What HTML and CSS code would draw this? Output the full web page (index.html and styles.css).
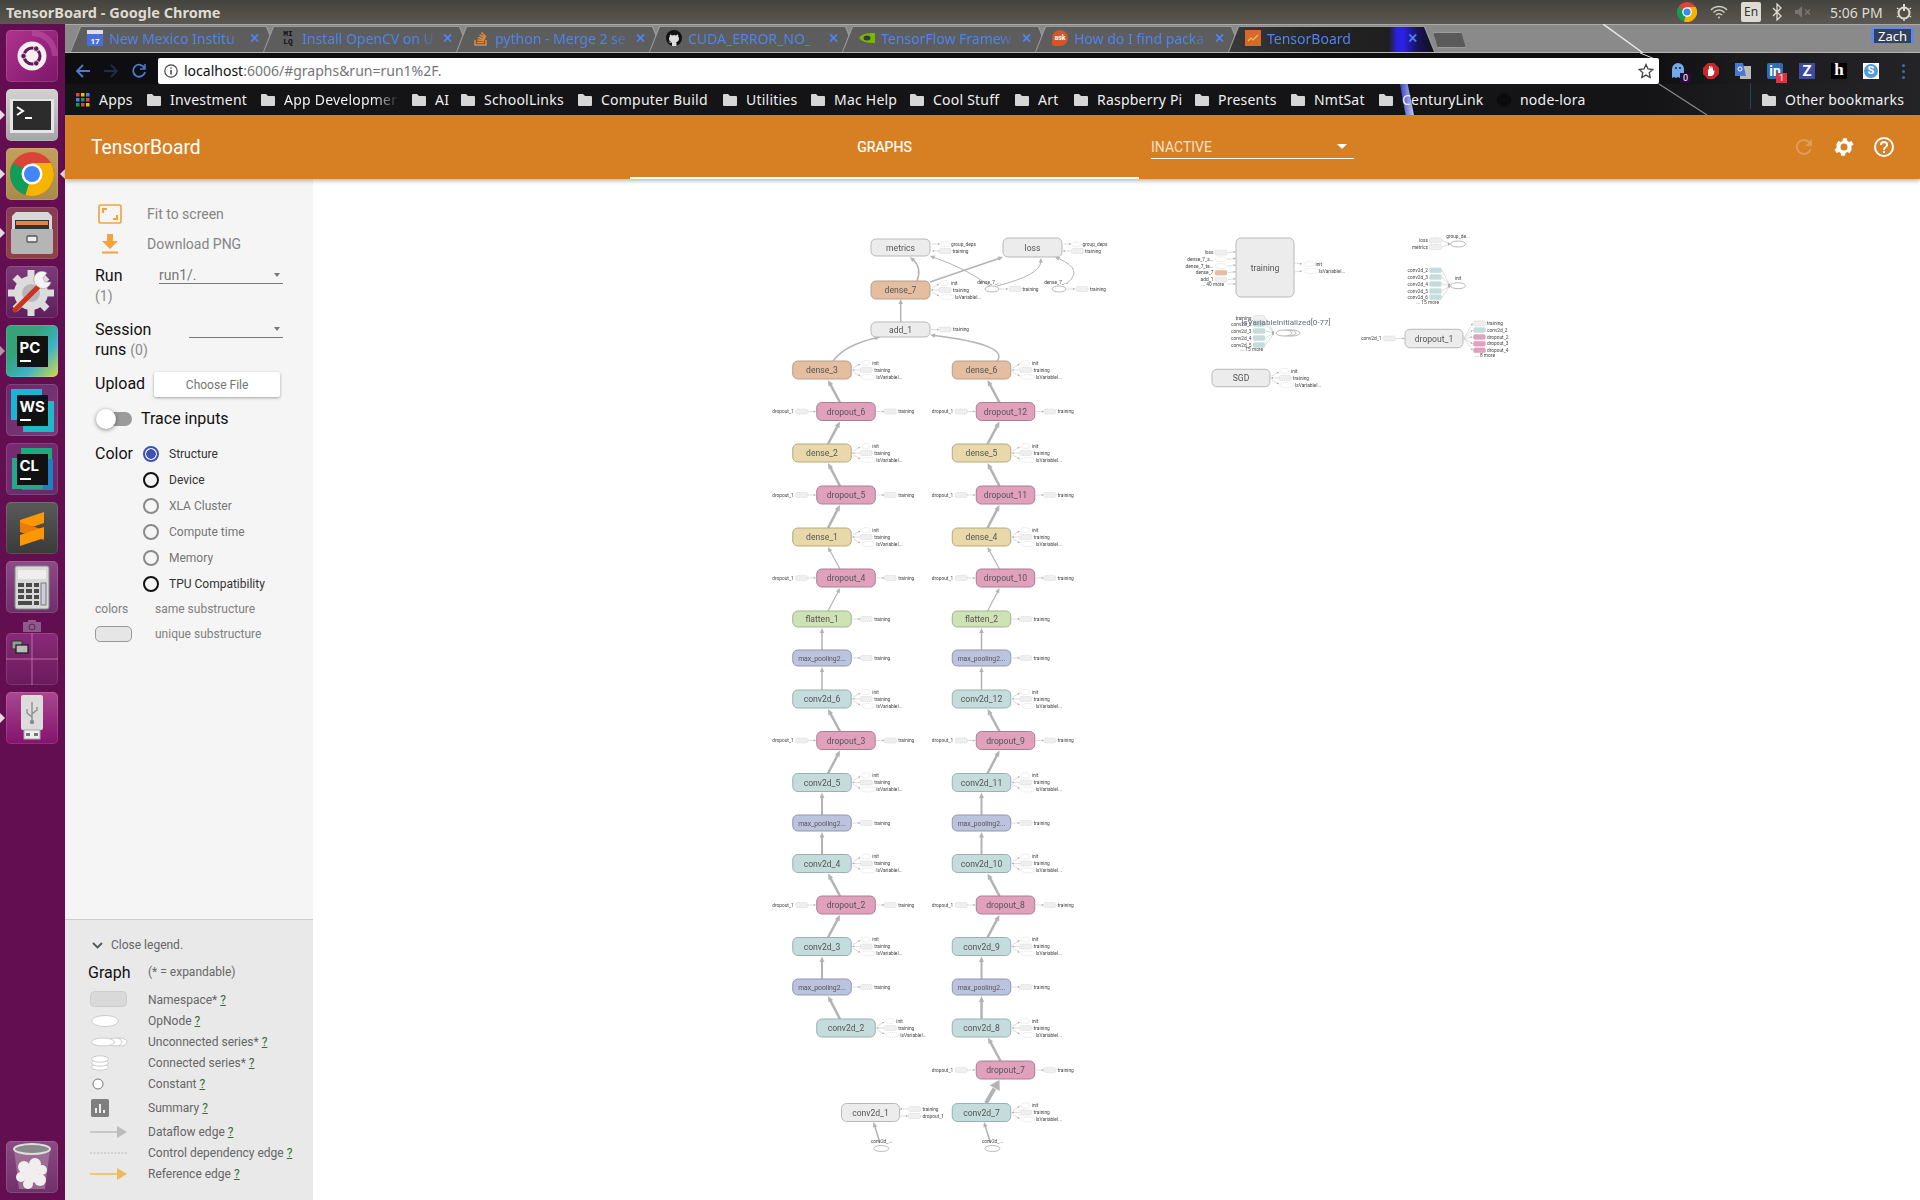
FILE: index.html
```html
<!DOCTYPE html>
<html lang="en">
<head>
    <meta charset="UTF-8">
    <title>TensorBoard - Google Chrome</title>
    <link rel="stylesheet" href="styles.css">
</head>
<body>
    <svg class="sprites" width="0" height="0">
        <symbol id="folder" viewBox="0 0 14 12"><path d="M1 0h4l2 2h6a1 1 0 0 1 1 1v8a1 1 0 0 1-1 1H1a1 1 0 0 1-1-1V1a1 1 0 0 1 1-1z"/></symbol>
    </svg>

    <div class="panel">
        <div class="panel-title">TensorBoard - Google Chrome</div>
        <div class="indicators">
            <svg class="ind-chrome" width="20" height="20" viewBox="0 0 20 20"><circle cx="10" cy="10" r="10" fill="#db4437"/><path d="M10 10L1.3 5A10 10 0 0 0 7 19.5z" fill="#0f9d58"/><path d="M10 10l-3 9.500A10 10 0 0 0 18.700 5H10z" fill="#f4b400"/><circle cx="10" cy="10" r="4.800" fill="#fff"/><circle cx="10" cy="10" r="3.600" fill="#4285f4"/></svg>
            <svg class="ind-wifi" width="18" height="14" viewBox="0 0 18 14" fill="none" stroke="#cfccc4" stroke-width="1.500"><path d="M1 5a11 11 0 0 1 16 0M3.500 7.500a7.500 7.500 0 0 1 11 0M6 10a4 4 0 0 1 6 0"/><circle cx="9" cy="12.500" r="1" fill="#cfccc4" stroke="none"/></svg>
            <div class="ind-lang">En</div>
            <svg class="ind-bt" width="10" height="18" viewBox="0 0 10 18" fill="none" stroke="#dfdbd2" stroke-width="1.300"><path d="M1 5l8 8-4 4V1l4 4-8 8"/></svg>
            <svg class="ind-vol" width="17" height="12" viewBox="0 0 17 12"><path d="M0 4h3l4-4v12L3 8H0z" fill="#77756e"/><path d="M10 3.500l5 5M15 3.500l-5 5" stroke="#77756e" stroke-width="1.500"/></svg>
            <div class="ind-time">5:06 PM</div>
            <svg class="ind-power" width="18" height="18" viewBox="0 0 18 18" fill="none" stroke="#dfdbd2" stroke-width="2"><circle cx="9" cy="10" r="5.500"/><path d="M9 1v7"/><path d="M9 1.500v1.500M2 5l1.500 1M16 5l-1.500 1M2 14l1.500-1M16 14l-1.500-1M9 16v2" stroke-width="1.500"/></svg>
        </div>
    </div>

    <div class="desk">
        <nav class="launcher">
            <div class="tile tile-ubuntu">
                <svg width="52" height="52" viewBox="0 0 52 52"><path d="M26 0a26 26 0 0 1 26 26h-6A20 20 0 0 0 26 6z" fill="#c45aa8" opacity=".5"/><circle cx="26" cy="26" r="14.500" fill="#f6eef3"/><circle cx="26" cy="26" r="8" fill="none" stroke="#5e1b55" stroke-width="3"/><circle cx="17.500" cy="26" r="2.700" fill="#5e1b55" stroke="#f6eef3" stroke-width=".8"/><circle cx="30.200" cy="18.700" r="2.700" fill="#5e1b55" stroke="#f6eef3" stroke-width=".8"/><circle cx="30.200" cy="33.300" r="2.700" fill="#5e1b55" stroke="#f6eef3" stroke-width=".8"/></svg>
            </div>
            <div class="tile tile-terminal">
                <svg width="52" height="52" viewBox="0 0 52 52"><rect x="4" y="10" width="44" height="34" fill="#e6e6e6"/><rect x="7" y="12" width="38" height="29" fill="#2c2c2c"/><path d="M11 18l6 4-6 4" fill="none" stroke="#fff" stroke-width="2"/><path d="M19 29h7" stroke="#fff" stroke-width="2"/></svg>
                <span class="pip"></span>
            </div>
            <div class="tile tile-chrome">
                <svg width="52" height="52" viewBox="0 0 52 52"><circle cx="26" cy="26" r="22" fill="#db4437"/><path d="M26 26L7 15a22 22 0 0 0 12.500 32z" fill="#0f9d58"/><path d="M26 26l-6.500 21A22 22 0 0 0 45 15H26z" fill="#f4b400"/><circle cx="26" cy="26" r="10.500" fill="#fff"/><circle cx="26" cy="26" r="8" fill="#4285f4"/></svg>
                <span class="pip"></span>
                <span class="pip pip-right"></span>
            </div>
            <div class="tile tile-files">
                <svg width="52" height="52" viewBox="0 0 52 52"><path d="M6 9l4-4h32l4 4v36H6z" fill="#d8d8d8"/><rect x="9" y="13" width="34" height="9" fill="#333"/><rect x="10" y="14" width="32" height="4" fill="#e8843c"/><path d="M5 22h42v23a2 2 0 0 1-2 2H7a2 2 0 0 1-2-2z" fill="#b5b5b5"/><rect x="21" y="29" width="10" height="6" rx="1" fill="#eee" stroke="#555" stroke-width="1.300"/></svg>
                <span class="pip"></span>
            </div>
            <div class="tile tile-settings">
                <svg width="52" height="52" viewBox="0 0 52 52"><circle cx="25" cy="27" r="17" fill="#dcdcdc"/><path d="M25 4v46M2 27h46M9 11l32 32M9 43l32-32" stroke="#dcdcdc" stroke-width="7"/><circle cx="25" cy="27" r="9" fill="#b9b3ba"/><path d="M9 44l25-25" stroke="#c8341f" stroke-width="5" stroke-linecap="round"/><path d="M31 20a8 8 0 0 1 10-13l-4 5 2 4 6 0a8 8 0 0 1-11 6z" fill="#f4f4f4" stroke="#999" stroke-width=".6"/></svg>
            </div>
            <div class="tile tile-pc">
                <div class="jb-square"><span>PC</span><i></i></div>
                <span class="pip pip-hollow"></span>
            </div>
            <div class="tile tile-ws">
                <div class="jb-square"><span>WS</span><i></i></div>
            </div>
            <div class="tile tile-cl">
                <div class="jb-square"><span>CL</span><i></i></div>
            </div>
            <div class="tile tile-sublime">
                <svg width="52" height="52" viewBox="0 0 52 52"><path d="M38 10v11L14 29V18z" fill="#ff9800"/><path d="M14 30l24 8v-10l-24-8z" fill="#e87e04"/><path d="M38 31v11l-24 8V39z" fill="#ff9800" transform="translate(0 -6)"/></svg>
            </div>
            <div class="tile tile-calc">
                <svg width="52" height="52" viewBox="0 0 52 52"><rect x="9" y="5" width="34" height="43" rx="2" fill="#d8d8d8" stroke="#888"/><rect x="12" y="9" width="28" height="9" fill="#eee"/><g fill="#4a4a4a"><rect x="12" y="22" width="6" height="4"/><rect x="20" y="22" width="6" height="4"/><rect x="28" y="22" width="5" height="4"/><rect x="12" y="28" width="6" height="4"/><rect x="20" y="28" width="6" height="4"/><rect x="28" y="28" width="5" height="4"/><rect x="12" y="34" width="6" height="4"/><rect x="20" y="34" width="6" height="4"/><rect x="28" y="34" width="5" height="4"/><rect x="12" y="40" width="14" height="4"/><rect x="28" y="40" width="5" height="4"/></g><rect x="35" y="22" width="5" height="22" fill="#ccd" stroke="#555" stroke-width=".7"/></svg>
            </div>
            <div class="shot-ghost">
                <svg width="20" height="14" viewBox="0 0 20 14"><rect x="1" y="3" width="18" height="10" fill="#8e5a8c"/><rect x="6" y="1" width="8" height="3" fill="#8e5a8c"/><circle cx="10" cy="8" r="3" fill="none" stroke="#5a2a58"/></svg>
            </div>
            <div class="tile tile-workspace">
                <svg width="52" height="52" viewBox="0 0 52 52"><path d="M26 0v52M0 26h52" stroke="#c796bd" stroke-width=".7"/><rect x="6" y="8" width="10" height="8" fill="#999" stroke="#333"/><rect x="10" y="12" width="12" height="8" fill="#bbb" stroke="#222" stroke-width="1.300"/></svg>
            </div>
            <div class="tile tile-usb">
                <svg width="52" height="52" viewBox="0 0 52 52"><rect x="15" y="3" width="22" height="35" rx="2" fill="#dcdcdc"/><rect x="18" y="38" width="16" height="9" fill="#eee" stroke="#aaa"/><rect x="20" y="41" width="4" height="3" fill="#777"/><rect x="28" y="41" width="4" height="3" fill="#777"/><path d="M26 10v20M26 25l-5-4v-4M26 22l5-4v-3" fill="none" stroke="#8a8a8a" stroke-width="1.300"/><circle cx="26" cy="30" r="2.200" fill="#8a8a8a"/></svg>
                <span class="pip"></span>
            </div>
            <div class="tile tile-trash">
                <svg width="52" height="52" viewBox="0 0 52 52"><path d="M8 8l5 40h26l5-40z" fill="#a882a0" opacity=".7"/><ellipse cx="26" cy="8" rx="18" ry="5" fill="#8a8a8a" stroke="#ddd" stroke-width="2"/><g fill="#f0eeee"><circle cx="18" cy="26" r="6"/><circle cx="29" cy="23" r="6"/><circle cx="36" cy="29" r="5"/><circle cx="15" cy="36" r="5"/><circle cx="25" cy="34" r="8"/><circle cx="34" cy="39" r="6"/><circle cx="22" cy="43" r="5"/></g></svg>
            </div>
        </nav>

        <div class="window">
            <div class="tabstrip">
                <div class="tab">
                    <svg class="favicon" width="16" height="16" viewBox="0 0 16 16"><rect width="16" height="16" rx="1" fill="#4a6fd8"/><rect width="16" height="4" fill="#dde"/><text x="8" y="14" text-anchor="middle" class="fav-text">17</text></svg>
                    <span class="tab-title">New Mexico Institu</span><span class="tab-x">×</span>
                </div>
                <div class="tab">
                    <div class="favicon fav-mlq">MI<br>LQ</div>
                    <span class="tab-title">Install OpenCV on U</span><span class="tab-x">×</span>
                </div>
                <div class="tab">
                    <svg class="favicon" width="16" height="16" viewBox="0 0 16 16" fill="none" stroke="#e08a3a" stroke-width="1.500"><path d="M2 10v5h11v-5"/><path d="M4 12.500h7M4.300 10l7 .6M5 7.500l6.800 1.800M6.500 4.800l6 3.200M8.500 2.500l4.500 4.500"/></svg>
                    <span class="tab-title">python - Merge 2 se</span><span class="tab-x">×</span>
                </div>
                <div class="tab">
                    <svg class="favicon" width="16" height="16" viewBox="0 0 16 16"><circle cx="8" cy="8" r="8" fill="#111"/><path d="M6 16v-3c-2 .4-3-.6-3.400-1.800 1 .3 1.400 1 2 1.300.5.200 1 .1 1.400-.2-1.800-.4-3-1.500-3-3.500 0-1 .3-1.600.8-2.200-.1-.6-.1-1.300.2-2 .8 0 1.500.4 2 .8a6 6 0 0 1 4 0c.5-.4 1.200-.8 2-.8.300.7.300 1.400.2 2 .5.600.8 1.200.8 2.200 0 2-1.200 3.100-3 3.500.3.300.5.800.5 1.400V16z" fill="#ddd"/></svg>
                    <span class="tab-title">CUDA_ERROR_NO_</span><span class="tab-x">×</span>
                </div>
                <div class="tab">
                    <svg class="favicon" width="16" height="16" viewBox="0 0 16 16"><path d="M0 8c3-4 7-5 16-5v10C8 13 3 12 0 8z" fill="#76b900"/><ellipse cx="8" cy="8" rx="3.500" ry="2.500" fill="#3a3a3a"/></svg>
                    <span class="tab-title">TensorFlow Framew</span><span class="tab-x">×</span>
                </div>
                <div class="tab">
                    <div class="favicon fav-ask">ask</div>
                    <span class="tab-title">How do I find packa</span><span class="tab-x">×</span>
                </div>
                <div class="tab tab-active">
                    <svg class="favicon" width="16" height="16" viewBox="0 0 16 16"><rect width="16" height="16" fill="#d8682f"/><path d="M3 11l3-3 2 2 5-5" fill="none" stroke="#f0c040" stroke-width="1.200"/></svg>
                    <span class="tab-title">TensorBoard</span><span class="tab-x">×</span>
                </div>
                <div class="new-tab"></div>
            </div>

            <div class="toolbar">
                <svg class="nav-icon" width="16" height="16" viewBox="0 0 16 16" fill="none" stroke="#4a7cd0" stroke-width="1.800"><path d="M15 8H2M8 2L2 8l6 6"/></svg>
                <svg class="nav-icon" width="16" height="16" viewBox="0 0 16 16" fill="none" stroke="#1d2c50" stroke-width="1.800"><path d="M1 8h13M8 2l6 6-6 6"/></svg>
                <svg class="nav-icon" width="16" height="16" viewBox="0 0 16 16" fill="none" stroke="#4a7cd0" stroke-width="1.800"><path d="M13.500 5A6 6 0 1 0 14 9"/><path d="M14 1v5H9" stroke-width="1.500"/></svg>
                <div class="urlbar">
                    <svg width="14" height="14" viewBox="0 0 14 14" fill="none" stroke="#444" stroke-width="1.200"><circle cx="7" cy="7" r="6.200"/><path d="M7 6v4.500M7 3.500v1.300" stroke-width="1.500"/></svg>
                    <div class="url"><span class="url-host">localhost</span>:6006/#graphs&amp;run=run1%2F.</div>
                    <svg class="url-star" width="16" height="16" viewBox="0 0 16 16" fill="none" stroke="#444" stroke-width="1.300"><path d="M8 1.500l2 4.500 4.800.5-3.600 3.200 1 4.800L8 12.100l-4.200 2.400 1-4.800L1.200 6.500 6 6z"/></svg>
                </div>
                <div class="exts">
                    <div class="ext"><svg width="16" height="20" viewBox="0 0 16 20"><path d="M1 8a6 6 0 0 1 12 0v9l-2-1-2 1-2-1-2 1-2-1-2 1z" fill="#74a9e8"/><circle cx="5" cy="7" r="1" fill="#123"/><circle cx="9" cy="7" r="1" fill="#123"/></svg><span class="ext-badge ext-badge-dark">0</span></div>
                    <div class="ext"><svg width="16" height="16" viewBox="0 0 16 16"><path d="M5 0h6l5 5v6l-5 5H5l-5-5V5z" fill="#c62828"/><path d="M5 13V6l1 1V3h1v3l1-4 1 4 1-3v5l1.500-1-.5 4-2 2z" fill="#fff"/></svg></div>
                    <div class="ext"><svg width="16" height="16" viewBox="0 0 16 16"><rect x="5" y="3" width="11" height="13" fill="#bbb"/><path d="M0 0h8l3 13H0z" fill="#4a78d8"/><circle cx="5" cy="6" r="2" fill="none" stroke="#fff"/></svg></div>
                    <div class="ext"><div class="ext-in">in</div><span class="ext-badge ext-badge-red">1</span></div>
                    <div class="ext"><div class="ext-z">Z</div></div>
                    <div class="ext"><div class="ext-h">h</div></div>
                    <div class="ext"><div class="ext-s"><span>S</span></div></div>
                    <div class="ext"><div class="ext-dots"><i></i><i></i><i></i></div></div>
                </div>
            </div>

            <div class="bookmarks">
                <div class="bm">
                    <svg class="bm-icon" width="14" height="14" viewBox="0 0 14 14"><rect width="3.500" height="3.500" fill="#d9483b"/><rect x="5" width="3.500" height="3.500" fill="#f4b400"/><rect x="10" width="3.500" height="3.500" fill="#4285f4"/><rect y="5" width="3.500" height="3.500" fill="#4285f4"/><rect x="5" y="5" width="3.500" height="3.500" fill="#0f9d58"/><rect x="10" y="5" width="3.500" height="3.500" fill="#d9483b"/><rect y="10" width="3.500" height="3.500" fill="#0f9d58"/><rect x="5" y="10" width="3.500" height="3.500" fill="#d9483b"/><rect x="10" y="10" width="3.500" height="3.500" fill="#f4b400"/></svg>
                    <span>Apps</span>
                </div>
                <div class="bm"><svg class="bm-folder"><use href="#folder"/></svg><span>Investment</span></div>
                <div class="bm bm-fade"><svg class="bm-folder"><use href="#folder"/></svg><span>App Developmer</span></div>
                <div class="bm"><svg class="bm-folder"><use href="#folder"/></svg><span>AI</span></div>
                <div class="bm"><svg class="bm-folder"><use href="#folder"/></svg><span>SchoolLinks</span></div>
                <div class="bm"><svg class="bm-folder"><use href="#folder"/></svg><span>Computer Build</span></div>
                <div class="bm"><svg class="bm-folder"><use href="#folder"/></svg><span>Utilities</span></div>
                <div class="bm"><svg class="bm-folder"><use href="#folder"/></svg><span>Mac Help</span></div>
                <div class="bm"><svg class="bm-folder"><use href="#folder"/></svg><span>Cool Stuff</span></div>
                <div class="bm"><svg class="bm-folder"><use href="#folder"/></svg><span>Art</span></div>
                <div class="bm"><svg class="bm-folder"><use href="#folder"/></svg><span>Raspberry Pi</span></div>
                <div class="bm"><svg class="bm-folder"><use href="#folder"/></svg><span>Presents</span></div>
                <div class="bm"><svg class="bm-folder"><use href="#folder"/></svg><span>NmtSat</span></div>
                <div class="bm"><svg class="bm-folder"><use href="#folder"/></svg><span>CenturyLink</span></div>
                <div class="bm">
                    <svg class="bm-icon" width="14" height="14" viewBox="0 0 14 14"><circle cx="7" cy="7" r="7" fill="#0b0b0b"/></svg>
                    <span>node-lora</span>
                </div>
                <div class="bm bm-other"><svg class="bm-folder"><use href="#folder"/></svg><span>Other bookmarks</span></div>
            </div>

            <!-- wallpaper showing through the translucent chrome theme -->
            <svg class="wallpaper" width="110" height="92" viewBox="0 0 110 92">
                <path d="M0 0L40 29" stroke="#e8e8e8" stroke-width="1.500"/>
                <path d="M37 29l15 6" stroke="#ddd"/>
                <path d="M56 60L104 91" stroke="#8a8a8a" stroke-width="1.200"/>
            </svg>
            <div class="stripe"></div>
            <div class="avatar"><span>Zach</span></div>

            <header class="tb-header">
                <div class="tb-title">TensorBoard</div>
                <div class="tb-tab">GRAPHS</div>
                <div class="tb-select"><span>INACTIVE</span><i class="tb-caret"></i></div>
                <div class="tb-icons">
                    <svg width="24" height="24" viewBox="0 0 24 24" fill="#e49a55"><path d="M17.650 6.350A8 8 0 1 0 19.700 14h-2.100a6 6 0 1 1-1.400-6.200L13 11h7V4z"/></svg>
                    <svg width="24" height="24" viewBox="0 0 24 24" fill="#fff"><path d="M19.400 13a7.500 7.500 0 0 0 0-2l2.100-1.600-2-3.500-2.500 1a7.500 7.500 0 0 0-1.700-1l-.4-2.600h-4l-.4 2.600a7.500 7.500 0 0 0-1.700 1l-2.500-1-2 3.500L4.600 11a7.500 7.500 0 0 0 0 2l-2.100 1.600 2 3.500 2.500-1c.5.400 1.100.7 1.700 1l.4 2.600h4l.4-2.600c.6-.3 1.200-.6 1.700-1l2.500 1 2-3.500zM12 15.500a3.500 3.500 0 1 1 0-7 3.500 3.500 0 0 1 0 7z"/></svg>
                    <svg width="24" height="24" viewBox="0 0 24 24" fill="#fff"><path d="M12 2a10 10 0 1 0 0 20 10 10 0 0 0 0-20zm0 18a8 8 0 1 1 0-16 8 8 0 0 1 0 16zM11 16h2v2h-2zm1-10a4 4 0 0 0-4 4h2a2 2 0 1 1 4 0c0 2-3 1.750-3 5h2c0-2.250 3-2.500 3-5a4 4 0 0 0-4-4z"/></svg>
                </div>
            </header>

            <div class="tb-body">
                <aside class="sidebar">
                    <div class="controls">
                        <div class="action-row">
                            <svg class="icon-fit" width="24" height="20" viewBox="0 0 24 20" fill="none" stroke="#f2a43c" stroke-width="1.700"><rect x="1" y="1" width="22" height="18" rx="1.500"/><path d="M5 9V5h4M19 11v4h-4" stroke-width="2"/></svg>
                            <span>Fit to screen</span>
                        </div>
                        <div class="action-row">
                            <svg class="icon-download" width="16" height="20" viewBox="0 0 16 20" fill="#f2a43c"><path d="M5 0h6v7h5l-8 8-8-8h5z"/><rect y="17.500" width="16" height="2"/></svg>
                            <span>Download PNG</span>
                        </div>
                        <div class="run-row">
                            <div class="field-label run-label">Run</div>
                            <div class="select select-run"><span>run1/.</span><i class="caret"></i></div>
                        </div>
                        <div class="count">(1)</div>
                        <div class="session-row">
                            <div class="field-label">Session<br>runs <span class="count">(0)</span></div>
                            <div class="select select-session"><i class="caret"></i></div>
                        </div>
                        <div class="upload-row">
                            <div class="field-label">Upload</div>
                            <div class="file-button">Choose File</div>
                        </div>
                        <div class="toggle-row">
                            <div class="toggle"><i></i></div>
                            <span class="field-label">Trace inputs</span>
                        </div>
                        <div class="color-block">
                            <div class="field-label color-label">Color</div>
                            <div class="radios">
                                <div class="radio radio-on"><i></i><span>Structure</span></div>
                                <div class="radio radio-dark"><i></i><span>Device</span></div>
                                <div class="radio"><i></i><span>XLA Cluster</span></div>
                                <div class="radio"><i></i><span>Compute time</span></div>
                                <div class="radio"><i></i><span>Memory</span></div>
                                <div class="radio radio-dark"><i></i><span>TPU Compatibility</span></div>
                            </div>
                        </div>
                        <div class="colors-row"><span>colors</span><span>same substructure</span></div>
                        <div class="colors-row colors-row-tall"><div class="substructure"></div><span>unique substructure</span></div>
                    </div>

                    <div class="legend">
                        <div class="legend-close">
                            <svg width="11" height="7" viewBox="0 0 11 7" fill="none" stroke="#555" stroke-width="1.800"><path d="M1 1l4.500 4.500L10 1"/></svg>
                            <span>Close legend.</span>
                        </div>
                        <div class="legend-head"><span class="legend-graph">Graph</span><span>(* = expandable)</span></div>
                        <div class="legend-row">
                            <svg width="38" height="17" viewBox="0 0 38 17"><rect x=".5" y=".5" width="36" height="15" rx="4" fill="#d9d9d9" stroke="#ccc"/></svg>
                            <span>Namespace* <u>?</u></span>
                        </div>
                        <div class="legend-row">
                            <svg width="38" height="14" viewBox="0 0 38 14"><ellipse cx="15" cy="7" rx="13.500" ry="5.500" fill="#fff" stroke="#ccc"/></svg>
                            <span>OpNode <u>?</u></span>
                        </div>
                        <div class="legend-row">
                            <svg width="38" height="12" viewBox="0 0 38 12" fill="#fff" stroke="#ccc"><ellipse cx="30" cy="6" rx="7" ry="4"/><ellipse cx="25" cy="6" rx="7" ry="4"/><ellipse cx="13" cy="6" rx="11.500" ry="4"/></svg>
                            <span>Unconnected series* <u>?</u></span>
                        </div>
                        <div class="legend-row">
                            <svg width="38" height="16" viewBox="0 0 38 16" fill="#fff" stroke="#ccc"><ellipse cx="10" cy="12" rx="8.500" ry="3.200"/><ellipse cx="10" cy="8" rx="8.500" ry="3.200"/><ellipse cx="10" cy="4" rx="8.500" ry="3.200"/></svg>
                            <span>Connected series* <u>?</u></span>
                        </div>
                        <div class="legend-row">
                            <svg width="38" height="12" viewBox="0 0 38 12"><circle cx="8" cy="6" r="5" fill="#fff" stroke="#777"/></svg>
                            <span>Constant <u>?</u></span>
                        </div>
                        <div class="legend-row legend-row-tall">
                            <svg width="38" height="18" viewBox="0 0 38 18"><rect x="1" width="18" height="18" rx="1.500" fill="#7f7f7f"/><path d="M5 9h2v5H5zM9 5h2v9H9zM13 11h2v3h-2z" fill="#eee"/></svg>
                            <span>Summary <u>?</u></span>
                        </div>
                        <div class="legend-row">
                            <svg width="38" height="12" viewBox="0 0 38 12"><path d="M0 6h28" stroke="#bbb" stroke-width="1.500"/><path d="M27 0l10 6-10 6z" fill="#bbb"/></svg>
                            <span>Dataflow edge <u>?</u></span>
                        </div>
                        <div class="legend-row">
                            <svg width="38" height="6" viewBox="0 0 38 6"><path d="M0 3h37" stroke="#bbb" stroke-dasharray="2 1.500"/></svg>
                            <span>Control dependency edge <u>?</u></span>
                        </div>
                        <div class="legend-row">
                            <svg width="38" height="12" viewBox="0 0 38 12"><path d="M0 6h28" stroke="#f0b95a" stroke-width="1.500"/><path d="M27 0l10 6-10 6z" fill="#f0b95a"/></svg>
                            <span>Reference edge <u>?</u></span>
                        </div>
                    </div>
                </aside>

                <main class="graph">
                    <svg id="graph" class="graph-svg" width="1607" height="1021" viewBox="313 179 1607 1021"></svg>
                </main>
            </div>
        </div>
    </div>

    <script src="graph.js"></script>
</body>
</html>
```
FILE: styles.css
```css
* {
    box-sizing: border-box;
}
html, body {
    margin: 0;
    height: 1200px;
    overflow: hidden;
}
body {
    font-family: Roboto, Arial, sans-serif;
    background: #fff;
}
.sprites {
    position: absolute;
}

/* desktop top panel */
.panel {
    height: 24px;
    display: flex;
    align-items: center;
    background: linear-gradient(#44433d, #5a5850);
    color: #dfdbd2;
}
.panel-title {
    padding-left: 6px;
    font: bold 14.500px "Noto Sans", sans-serif;
}
.indicators {
    margin-left: auto;
    display: flex;
    align-items: center;
    padding-right: 7px;
}
.ind-wifi, .ind-lang, .ind-vol, .ind-power {
    margin-left: 13px;
}
.ind-bt {
    margin-left: 11px;
}
.ind-time {
    margin-left: 18px;
    font: 14px "Noto Sans", sans-serif;
    width: 52px;
    white-space: nowrap;
}
.ind-lang {
    width: 20px;
    height: 20px;
    background: #dfdbd2;
    color: #333;
    border-radius: 2px;
    font: 12px/20px "Noto Sans", sans-serif;
    text-align: center;
}

.desk {
    display: flex;
    height: 1176px;
}

/* unity launcher */
.launcher {
    width: 65px;
    flex: none;
    display: flex;
    flex-direction: column;
    align-items: flex-start;
    gap: 7px;
    padding: 6px 0 7px 6px;
    background: #620e50;
}
.tile {
    position: relative;
    width: 52px;
    height: 52px;
    flex: none;
    border-radius: 5px;
    display: flex;
    align-items: center;
    justify-content: center;
    box-shadow: inset 0 0 0 1px rgba(255, 255, 255, .12);
}
.tile-ubuntu { background: linear-gradient(135deg, #b0348f, #7d1768); }
.tile-terminal { background: linear-gradient(#d2d2d2, #a5a5a5); }
.tile-chrome { background: linear-gradient(#c2a15a, #a88a4a); }
.tile-files { background: linear-gradient(#8b3a55, #8f4046); }
.tile-settings { background: linear-gradient(#7c3a78, #5f1e5c); }
.tile-pc { background: linear-gradient(135deg, #35a27a 35%, #3bb3c6 65%, #d9d83f); }
.tile-ws { background: linear-gradient(135deg, #6a2a6a, #7a3a7a); }
.tile-cl { background: linear-gradient(135deg, #7a2a72, #6a2a68); }
.tile-sublime { background: linear-gradient(#5a5a5a, #3a3a3a); }
.tile-calc { background: linear-gradient(#8c4a86, #6e2f6a); }
.tile-workspace { background: linear-gradient(#8a2a78, #6a1a5c); }
.tile-usb { background: linear-gradient(#a8488f, #85126e); }
.tile-trash {
    margin-top: auto;
    background: linear-gradient(#8a4a82, #70306a);
}
.tile-workspace {
    margin-top: -7px;
}
.shot-ghost {
    height: 15px;
    width: 52px;
    margin-top: -2px;
    text-align: center;
}
.pip {
    position: absolute;
    left: -6px;
    top: 21px;
    border-left: 5px solid #e6dbe4;
    border-top: 5px solid transparent;
    border-bottom: 5px solid transparent;
}
.pip-hollow {
    opacity: .65;
}
.pip-right {
    left: auto;
    right: -7px;
    border-left: 0;
    border-right: 5px solid #e6dbe4;
}
.jb-square {
    width: 31px;
    height: 31px;
    background: #111;
    color: #fff;
    font: bold 15px/19px Inter, sans-serif;
    padding: 2px 0 0 3px;
    position: relative;
}
.jb-square span {
    display: block;
}
.jb-square i {
    display: block;
    width: 11px;
    height: 2px;
    margin-top: 3px;
    background: #fff;
}
.tile-ws .jb-square { box-shadow: -6px -6px 0 #19b5d5, 6px 6px 0 #1fb7c9; }
.tile-cl .jb-square { box-shadow: -5px 4px 0 #1fa88a, 5px 5px 0 #1f7fc5, 4px -6px 0 #21a97e; }

/* chrome window */
.window {
    flex: 1;
    min-width: 0;
    position: relative;
    display: flex;
    flex-direction: column;
}
.tabstrip {
    height: 29px;
    flex: none;
    display: flex;
    padding: 1px 0 0 5px;
    background: #8a8a8a;
    border-top: 1px solid #aaa;
    border-bottom: 1px solid #b5b5b5;
}
.tab {
    width: 207px;
    margin-right: -14px;
    position: relative;
    display: flex;
    align-items: center;
    padding: 0 7px 2px 17px;
    clip-path: polygon(10px 0, 197px 0, 207px 100%, 0 100%);
    background: #9a9a9a;
}
.tab::before {
    content: "";
    position: absolute;
    inset: 1px 1px 0;
    background: #5d5d5d;
    clip-path: polygon(10px 0, 195px 0, 205px 100%, 0 100%);
}
.tab > * {
    position: relative;
}
.tab-active::before {
    background: linear-gradient(90deg, #3a3a3a, #232323 45%, #1f1f1f 78%, #2a20e0 82%, #2a20e0 85%, #18125f 92%, #111);
}
.favicon {
    flex: none;
}
.fav-text {
    font: bold 8px Roboto, sans-serif;
    fill: #fff;
}
.fav-mlq {
    width: 16px;
    font: bold 8px/8px "Liberation Mono", monospace;
    color: #111;
    text-align: center;
}
.fav-ask {
    width: 16px;
    height: 16px;
    border-radius: 8px 8px 8px 2px;
    background: #d2562a;
    color: #fff;
    font: bold 7px/16px Roboto, sans-serif;
    text-align: center;
}
.tab-title {
    width: 136px;
    margin-left: 6px;
    white-space: nowrap;
    font: 14px "Noto Sans", sans-serif;
    color: #4f84ee;
    mask-image: linear-gradient(90deg, #000 118px, transparent 136px);
}
.tab-x {
    margin-left: 5px;
    color: #4f84ee;
    font: 18px/18px Roboto, sans-serif;
}
.new-tab {
    width: 33px;
    height: 16px;
    margin: 6px 0 0 12px;
    background: #5a5a5a;
    border: 1px solid #9a9a9a;
    clip-path: polygon(0 0, 85% 0, 100% 100%, 15% 100%);
}
.toolbar {
    height: 31px;
    flex: none;
    display: flex;
    align-items: flex-end;
    padding-left: 10px;
    background: linear-gradient(90deg, #0e0e10 85%, #1a1a1c 90%, #242426);
}
.nav-icon {
    margin: 0 12px 5px 0;
    flex: none;
}
.urlbar {
    width: 1501px;
    height: 26px;
    margin-left: -1px;
    flex: none;
    display: flex;
    align-items: center;
    padding: 0 5px 1px 6px;
    background: #fff;
    border-radius: 2px;
    z-index: 1;
}
.url {
    margin-left: 6px;
    color: #757575;
    font: 14px "Noto Sans", sans-serif;
}
.url-host {
    color: #111;
}
.url-star {
    margin-left: auto;
}
.exts {
    display: flex;
    margin-left: 4px;
    height: 31px;
    z-index: 1;
}
.ext {
    position: relative;
    width: 32px;
    display: flex;
    align-items: center;
    justify-content: center;
    padding-top: 5px;
}
.ext-badge {
    position: absolute;
    left: 17px;
    top: 20px;
    width: 11px;
    height: 10px;
    color: #fff;
    font: 9px/10px Roboto, sans-serif;
    text-align: center;
}
.ext-badge-dark { background: #2a0d3c; }
.ext-badge-red { background: #d9343f; }
.ext-in {
    width: 16px;
    height: 16px;
    background: #2f6db5;
    color: #fff;
    border-radius: 2px;
    font: bold 14px/16px Roboto, sans-serif;
    text-align: center;
}
.ext-z {
    width: 16px;
    height: 16px;
    background: #3f4aa0;
    color: #fff;
    font: bold 15px/16px Roboto, sans-serif;
    text-align: center;
}
.ext-h {
    width: 16px;
    height: 16px;
    background: #000;
    color: #fff;
    font: bold 17px/14px "Liberation Serif", serif;
    text-align: center;
}
.ext-s {
    width: 16px;
    height: 16px;
    padding: 1px;
    background: #fff;
    text-align: center;
}
.ext-s span {
    display: block;
    height: 14px;
    border-radius: 50%;
    background: #4f9ae0;
    color: #fff;
    font: bold 11px/14px Roboto, sans-serif;
}
.ext-dots {
    display: flex;
    flex-direction: column;
    gap: 3px;
}
.ext-dots i {
    width: 3px;
    height: 3px;
    border-radius: 50%;
    background: #3d6db5;
}
.bookmarks {
    height: 31px;
    flex: none;
    display: grid;
    grid-template-columns: 71px 114px 151px 49px 117px 145px 88px 99px 105px 59px 121px 96px 88px 118px 265px 150px;
    align-items: center;
    padding-left: 11px;
    background: linear-gradient(90deg, #141416 85%, #1c1c1e 90%, #242426);
    color: #f0f0f0;
    font: 14px "Noto Sans", sans-serif;
    letter-spacing: .22px;
}
.bm {
    display: flex;
    align-items: center;
    white-space: nowrap;
    position: relative;
    z-index: 1;
}
.bm-icon {
    flex: none;
    margin-right: 9px;
}
.bm-folder {
    width: 14px;
    height: 12px;
    flex: none;
    margin-right: 9px;
    fill: #d6d6d6;
}
.bm-fade span {
    mask-image: linear-gradient(90deg, #000 90px, transparent 115px);
}
.bm-other::before {
    content: "";
    position: absolute;
    left: -12px;
    top: -7px;
    height: 26px;
    border-left: 1px solid #2c3d55;
}
.wallpaper {
    position: absolute;
    left: 1538px;
    top: 0;
    pointer-events: none;
}
.stripe {
    position: absolute;
    left: 1335px;
    top: 60px;
    width: 14px;
    height: 31px;
    background: linear-gradient(90deg, #3a40c8, #c4caf0);
    clip-path: polygon(0 0, 55% 0, 100% 100%, 40% 100%);
}
.avatar {
    position: absolute;
    left: 1806px;
    top: 4px;
    width: 43px;
    height: 16px;
    padding: 1px 4px;
    background: #5a8ae8;
    border-radius: 2px;
    color: #fff;
    font: 13px/14px "Noto Sans", sans-serif;
    text-align: center;
}
.avatar span {
    display: block;
    background: #33405c;
    margin: 0 -1px;
}

/* tensorboard header */
.tb-header {
    height: 64px;
    flex: none;
    display: flex;
    align-items: center;
    padding: 0 24px 0 26px;
    background: #d77f23;
    color: #fff;
    box-shadow: 0 2px 4px rgba(0, 0, 0, .28);
    position: relative;
    z-index: 2;
}
.tb-title {
    width: 539px;
    font-size: 19.300px;
}
.tb-tab {
    width: 509px;
    height: 64px;
    line-height: 64px;
    font-size: 14px;
    text-align: center;
    border-bottom: 2px solid #fff;
    -webkit-text-stroke: .2px #fff;
}
.tb-select {
    width: 203px;
    height: 24px;
    margin-left: 12px;
    display: flex;
    align-items: center;
    justify-content: space-between;
    padding-right: 7px;
    border-bottom: 1px solid #fff;
    font-size: 14px;
    color: #f6e0c6;
}
.tb-caret {
    border-top: 5px solid #fff;
    border-left: 5px solid transparent;
    border-right: 5px solid transparent;
}
.tb-icons {
    margin-left: auto;
    display: flex;
    gap: 16px;
}

.tb-body {
    flex: 1;
    min-height: 0;
    display: flex;
}

/* sidebar */
.sidebar {
    width: 248px;
    flex: none;
    display: flex;
    flex-direction: column;
    background: #f5f5f5;
}
.controls {
    flex: 1;
    padding: 20px 30px 0;
    font-size: 14px;
}
.action-row {
    height: 30px;
    display: grid;
    grid-template-columns: 52px 1fr;
    align-items: center;
    color: #858585;
}
.icon-fit {
    margin-left: 3px;
}
.icon-download {
    margin-left: 7px;
}
.field-label {
    font-size: 16px;
    line-height: 20px;
    color: #111;
}
.select {
    display: flex;
    align-items: center;
    justify-content: space-between;
    border-bottom: 1px solid #777;
    color: #777;
    padding-right: 3px;
}
.caret {
    border-top: 4px solid #777;
    border-left: 3.500px solid transparent;
    border-right: 3.500px solid transparent;
    margin-left: auto;
}
.run-row {
    display: flex;
    margin-top: 5px;
    height: 24px;
    align-items: flex-start;
}
.run-label {
    width: 64px;
    line-height: 24px;
}
.select-run {
    width: 124px;
    height: 20px;
    padding-top: 2px;
}
.count {
    font-size: 14px;
    line-height: 16px;
    color: #8a8a8a;
}
.session-row {
    display: flex;
    justify-content: space-between;
    margin-top: 16px;
}
.select-session {
    width: 94px;
    height: 18px;
}
.upload-row {
    display: flex;
    align-items: center;
    height: 26px;
    margin-top: 11px;
}
.file-button {
    width: 126px;
    height: 25px;
    margin-left: 9px;
    background: #fff;
    border-radius: 2px;
    box-shadow: 0 1px 3px rgba(0, 0, 0, .35);
    color: #757575;
    font-size: 12px;
    line-height: 27px;
    text-align: center;
}
.toggle-row {
    display: flex;
    align-items: center;
    height: 24px;
    margin-top: 10px;
    gap: 9px;
}
.toggle {
    position: relative;
    width: 37px;
    height: 14px;
    flex: none;
}
.toggle::before {
    content: "";
    position: absolute;
    left: 5px;
    right: 0;
    top: 0;
    bottom: 0;
    border-radius: 7px;
    background: #9b9b9b;
}
.toggle i {
    position: absolute;
    left: 1px;
    top: -3px;
    width: 20px;
    height: 20px;
    border-radius: 50%;
    background: #fff;
    box-shadow: 0 1px 4px rgba(0, 0, 0, .45);
}
.color-block {
    display: flex;
    margin-top: 10px;
}
.color-label {
    width: 48px;
    line-height: 26px;
}
.radio {
    height: 26px;
    display: flex;
    align-items: center;
    gap: 10px;
    font-size: 12px;
    color: #757575;
}
.radio i {
    width: 16px;
    height: 16px;
    border-radius: 50%;
    border: 2px solid #8a8a8a;
    flex: none;
}
.radio-dark {
    color: #333;
}
.radio-dark i {
    border-color: #111;
}
.radio-on {
    color: #333;
}
.radio-on i {
    border-color: #3f51b5;
    background: radial-gradient(circle, #3f51b5 4.500px, transparent 5px);
}
.colors-row {
    display: flex;
    align-items: center;
    height: 24px;
    font-size: 12px;
    color: #808080;
}
.colors-row-tall {
    height: 26px;
}
.colors-row span:first-child {
    width: 60px;
    flex: none;
}
.substructure {
    width: 37px;
    height: 16px;
    flex: none;
    margin-right: 23px;
    border: 1.500px solid #999;
    border-radius: 5px;
    background: #e6e6e6;
}

/* legend */
.legend {
    height: 281px;
    flex: none;
    padding: 15px 0 0 23px;
    border-top: 1px solid #ccc;
    background: #e9e9e9;
    font-size: 12px;
    color: #666;
}
.legend-close {
    height: 20px;
    display: flex;
    align-items: center;
    gap: 8px;
    padding-left: 4px;
}
.legend-head {
    height: 34px;
    display: flex;
    align-items: center;
}
.legend-graph {
    width: 60px;
    font-size: 16px;
    color: #111;
}
.legend-row {
    height: 21px;
    display: grid;
    grid-template-columns: 60px 1fr;
    align-items: center;
    white-space: nowrap;
}
.legend-row-tall {
    height: 27px;
}
.legend-row svg {
    margin-left: 2px;
}
.legend-row u {
    color: #3c6a3c;
}

/* graph canvas */
.graph {
    flex: 1;
    min-width: 0;
    background: #fff;
}
.graph-svg {
    display: block;
    filter: blur(.3px);
    font-family: Roboto, sans-serif;
}
.node {
    stroke-width: 1;
}
.n-gray { fill: #ececec; stroke: #b9b9b9; }
.n-brown { fill: #e5bda0; stroke: #b49e8c; }
.n-tan { fill: #e9d9aa; stroke: #b5a982; }
.n-pink { fill: #e1a1bd; stroke: #a97f92; }
.n-green { fill: #cfe2b5; stroke: #a3b38f; }
.n-purple { fill: #bcc3de; stroke: #9298b0; }
.n-teal { fill: #c4dcdb; stroke: #9bb1b1; }
.node-label {
    font-size: 8.600px;
    fill: #555;
    text-anchor: middle;
}
.node-label-small {
    font-size: 6.800px;
}
.mini-label {
    font-size: 4.800px;
    fill: #444;
}
.mini-end {
    text-anchor: end;
}
.mini-mid {
    text-anchor: middle;
}
.title-label {
    font-size: 8px;
    fill: #666c80;
    text-anchor: middle;
}
.ghost {
    fill: #efefef;
    stroke: #ccc;
    stroke-width: .6;
    stroke-dasharray: 1 .8;
}
.ghost-op {
    fill: #fff;
}
.ghost-teal { fill: #c4dcdb; stroke: #c4dcdb; }
.ghost-pink { fill: #e1a1bd; stroke: #e1a1bd; }
.ghost-brown { fill: #e5bda0; stroke: #e5bda0; }
.op {
    fill: #fff;
    stroke: #aaa;
    stroke-width: .8;
}
.edge {
    fill: none;
    stroke: #b3b3b3;
}
.head {
    fill: #b3b3b3;
}
.thin-edge {
    fill: none;
    stroke: #bbb;
    stroke-width: .5;
}
.thin-head {
    fill: #aaa;
}
```
FILE: graph.js
```js
// draws the tensorboard graph into the svg canvas, coordinates are page pixels
var out = "";

function round(v) {
    return Math.round(v * 100) / 100;
}

function box(cx, cy, w, h, label, color, small) {
    out += '<rect class="node n-' + color + '" x="' + (cx - w / 2) + '" y="' + (cy - h / 2) + '" width="' + w + '" height="' + h + '" rx="5"/>';
    out += '<text class="node-label' + (small ? ' node-label-small' : '') + '" x="' + cx + '" y="' + (cy + 3) + '">' + label + '</text>';
}

function mini(x, y, text, cls) {
    out += '<text class="mini-label ' + (cls || '') + '" x="' + x + '" y="' + (y + 1.6) + '">' + text + '</text>';
}

function ghostRect(x, y, color) {
    out += '<rect class="ghost ' + (color ? 'ghost-' + color : '') + '" x="' + x + '" y="' + (y - 2.5) + '" width="12" height="5" rx="1.500"/>';
}

function ghostOval(cx, y, rx) {
    out += '<ellipse class="ghost ghost-op" cx="' + cx + '" cy="' + y + '" rx="' + rx + '" ry="2.500"/>';
}

function thin(x1, y1, x2, y2) {
    var a = Math.atan2(y2 - y1, x2 - x1), s = 2.2;
    out += '<line class="thin-edge" x1="' + x1 + '" y1="' + y1 + '" x2="' + x2 + '" y2="' + y2 + '"/>';
    out += '<path class="thin-head" d="M' + x2 + ' ' + y2 + 'L' + round(x2 - s * Math.cos(a - .5)) + ' ' + round(y2 - s * Math.sin(a - .5)) + 'L' + round(x2 - s * Math.cos(a + .5)) + ' ' + round(y2 - s * Math.sin(a + .5)) + 'z"/>';
}

function edge(x1, y1, x2, y2, w, cx, cy) {
    var fromX = cx === undefined ? x1 : cx;
    var fromY = cy === undefined ? y1 : cy;
    var a = Math.atan2(y2 - fromY, x2 - fromX);
    var s = w > 3 ? 11 : 4 + w;
    var baseX = round(x2 - (s - 1) * Math.cos(a));
    var baseY = round(y2 - (s - 1) * Math.sin(a));
    var d = cx === undefined ? 'M' + x1 + ' ' + y1 + 'L' + baseX + ' ' + baseY : 'M' + x1 + ' ' + y1 + 'Q' + cx + ' ' + cy + ' ' + baseX + ' ' + baseY;
    out += '<path class="edge" stroke-width="' + w + '" d="' + d + '"/>';
    var spread = w > 3 ? .55 : .42;
    out += '<path class="head" d="M' + x2 + ' ' + y2 + 'L' + round(x2 - s * Math.cos(a - spread)) + ' ' + round(y2 - s * Math.sin(a - spread)) + 'L' + round(x2 - s * Math.cos(a + spread)) + ' ' + round(y2 - s * Math.sin(a + spread)) + 'z"/>';
}

// init / training / IsVariableI... group on the right of layer nodes
function layerExtras(right, cy) {
    thin(right + 2, cy - 2, right + 9, cy - 6);
    ghostOval(right + 14.5, cy - 7, 4.5);
    mini(right + 21, cy - 7, "init");
    thin(right + 9, cy, right + 1, cy);
    ghostRect(right + 9, cy);
    mini(right + 23, cy, "training");
    thin(right + 2, cy + 2, right + 9, cy + 6);
    ghostOval(right + 17, cy + 7, 7);
    mini(right + 25, cy + 7, "IsVariableI...");
}

function dropoutExtras(left, right, cy) {
    mini(left - 23, cy, "dropout_1", "mini-end");
    ghostRect(left - 21, cy);
    thin(left - 9, cy, left - 1, cy);
    thin(right + 1, cy, right + 9, cy);
    ghostRect(right + 9, cy);
    mini(right + 23, cy, "training");
}

function trainingExtra(right, cy) {
    thin(right + 1, cy, right + 9, cy);
    ghostRect(right + 9, cy);
    mini(right + 23, cy, "training");
}

// one row of the two layer columns
var H = 18;
var rows = [
    { y: 370, left: "dense_3", right: "dense_6", color: "brown", kind: "dense" },
    { y: 411.5, left: "dropout_6", right: "dropout_12", color: "pink", kind: "dropout", w: 2.5 },
    { y: 453, left: "dense_2", right: "dense_5", color: "tan", kind: "dense", w: 2.5 },
    { y: 495, left: "dropout_5", right: "dropout_11", color: "pink", kind: "dropout", w: 2.5 },
    { y: 537, left: "dense_1", right: "dense_4", color: "tan", kind: "dense", w: 2.5 },
    { y: 578, left: "dropout_4", right: "dropout_10", color: "pink", kind: "dropout", w: 1.2 },
    { y: 619, left: "flatten_1", right: "flatten_2", color: "green", kind: "pool", h: 16, w: 1.2 },
    { y: 658, left: "max_pooling2...", right: "max_pooling2...", color: "purple", kind: "pool", h: 16, small: true, w: 1.5 },
    { y: 699, left: "conv2d_6", right: "conv2d_12", color: "teal", kind: "dense", w: 1.5 },
    { y: 740.5, left: "dropout_3", right: "dropout_9", color: "pink", kind: "dropout", w: 2.5 },
    { y: 782.5, left: "conv2d_5", right: "conv2d_11", color: "teal", kind: "dense", w: 2.5 },
    { y: 823, left: "max_pooling2...", right: "max_pooling2...", color: "purple", kind: "pool", h: 16, small: true, w: 2 },
    { y: 863.5, left: "conv2d_4", right: "conv2d_10", color: "teal", kind: "dense", w: 2 },
    { y: 905, left: "dropout_2", right: "dropout_8", color: "pink", kind: "dropout", w: 2.5 },
    { y: 946.5, left: "conv2d_3", right: "conv2d_9", color: "teal", kind: "dense", w: 2.5 },
    { y: 987, left: "max_pooling2...", right: "max_pooling2...", color: "purple", kind: "pool", h: 16, small: true, w: 2 },
    { y: 1028, left: "conv2d_2", right: "conv2d_8", color: "teal", kind: "dense", w: 2.5 }
];

function drawColumn(denseX, side) {
    var dropX = denseX + 24;
    rows.forEach(function (r, i) {
        var cx = r.kind === "dropout" ? dropX : denseX;
        if (side === "left" && r.left === "conv2d_2") cx = dropX;
        var h = r.h || H;
        if (i > 0) {
            var up = rows[i - 1];
            var upX = up.kind === "dropout" ? dropX : denseX;
            var dx = cx - upX;
            edge(cx - dx * .25, r.y - h / 2, upX + dx * .25, up.y + (up.h || H) / 2 + 1, r.w);
        }
        box(cx, r.y, 58.5, h, r[side], r.color, r.small);
        var right = cx + 29.25;
        if (r.kind === "dense") layerExtras(right, r.y);
        if (r.kind === "dropout") dropoutExtras(cx - 29.25, right, r.y);
        if (r.kind === "pool") trainingExtra(right, r.y);
    });
}

function draw() {
    var L = 822, R = 981.5;

    // top of the main graph
    edge(917, 281, 910, 257, 1.5, 922, 268);
    edge(930, 282, 1003, 257, 1.5);
    edge(990, 286, 930, 256, 1, 965, 268);
    edge(997, 286, 1041, 258, 1, 1040, 275);
    edge(1066, 284, 1055, 257, 1, 1085, 270);
    edge(900.7, 322, 900.7, 299, 1.5);
    edge(833, 361, 880, 337, 1.5, 845, 345);
    edge(997, 361, 930, 335, 1.5, 1010, 345);
    box(900.5, 247.5, 59, 17, "metrics", "gray");
    box(1032.5, 247.5, 59, 19, "loss", "gray");
    box(900.5, 290, 59, 18, "dense_7", "brown");
    box(900.5, 329.5, 59, 15, "add_1", "gray");

    thin(932, 244, 940, 244);
    ghostOval(944.5, 244.3, 5);
    mini(951, 244.3, "group_deps");
    thin(940, 251, 932, 251);
    ghostRect(939, 251);
    mini(952.5, 251, "training");
    thin(1064, 244, 1071, 244);
    ghostOval(1076, 244.3, 5);
    mini(1082.5, 244.3, "group_deps");
    thin(1071, 251, 1063, 251);
    ghostRect(1071.5, 251);
    mini(1085, 251, "training");
    layerExtras(930, 290);
    trainingExtra(930, 329.5);

    out += '<ellipse class="op" cx="992" cy="289" rx="7" ry="3"/>';
    mini(989, 282, "dense_7_...", "mini-mid");
    thin(1000, 289, 1008, 289);
    ghostRect(1009, 289);
    mini(1022.5, 289, "training");
    out += '<ellipse class="op" cx="1059" cy="289" rx="7" ry="3"/>';
    mini(1056, 282, "dense_7_...", "mini-mid");
    thin(1067, 289, 1075, 289);
    ghostRect(1076, 289);
    mini(1090, 289, "training");

    drawColumn(L, "left");
    drawColumn(R, "right");

    // bottom of the right column
    edge(1000.5, 1061, 988, 1037.5, 2.5);
    edge(986, 1103, 999.5, 1080, 4);
    box(1005.5, 1070, 58.5, 18, "dropout_7", "pink");
    dropoutExtras(976.25, 1034.75, 1070);
    box(981.5, 1112.5, 58.5, 18, "conv2d_7", "teal");
    layerExtras(1010.75, 1112.5);

    // conv2d_1 sits alone between the columns
    box(870.5, 1112.5, 58, 18, "conv2d_1", "gray");
    thin(908, 1109, 900, 1109);
    ghostRect(908.5, 1109);
    mini(922.5, 1109, "training");
    thin(900, 1116, 908, 1116);
    ghostRect(908.5, 1116);
    mini(922.5, 1116, "dropout_1");
    edge(880, 1143, 873.5, 1122, 1.5);
    edge(990.5, 1143, 984, 1122, 1.5);
    out += '<ellipse class="op" cx="881.3" cy="1148.5" rx="7.500" ry="3"/>';
    mini(881.5, 1141, "conv2d_...", "mini-mid");
    out += '<ellipse class="op" cx="992.3" cy="1148.5" rx="7.500" ry="3"/>';
    mini(992.5, 1141, "conv2d_...", "mini-mid");

    drawAuxiliary();

    document.getElementById("graph").innerHTML = out;
}

// the separated nodes at the top right
function drawAuxiliary() {
    var oy = 220;
    var p = function (v, o) { return o + v / 3; };

    box(1265, 267.5, 58, 59, "training", "gray");
    var inputs = [["loss", 98, "rect"], ["dense_7_s...", 118, "oval"], ["dense_7_ta...", 138, "oval"], ["dense_7", 158, "brown"], ["add_1", 179, "rect"]];
    inputs.forEach(function (item) {
        var y = p(item[1], oy);
        mini(1213.5, y, item[0], "mini-end");
        if (item[2] === "oval") ghostOval(1221, y, 6);
        else ghostRect(1215, y, item[2] === "brown" ? "brown" : "");
        thin(1228, y, 1235.5, y - 1);
    });
    mini(1224, 284, "... 40 more", "mini-end");
    thin(1227, 284, 1235.5, 284);
    thin(1294.5, 263, 1302, 264);
    ghostOval(1309.5, 264, 5.5);
    mini(1315.5, 264, "init");
    thin(1294.5, 272, 1302, 271);
    ghostOval(1311.5, 271, 7.5);
    mini(1319, 271, "IsVariableI...");

    // group_deps
    out += '<ellipse class="op" cx="1458" cy="244" rx="7.500" ry="3"/>';
    mini(1458, 236.5, "group_de...", "mini-mid");
    [["loss", 61], ["metrics", 81]].forEach(function (item) {
        var y = p(item[1], oy);
        mini(1428, y, item[0], "mini-end");
        ghostRect(1429.5, y);
        thin(1442, y, 1450, 244);
    });

    // init
    out += '<ellipse class="op" cx="1458" cy="285.700" rx="7.500" ry="3"/>';
    mini(1458, 278, "init", "mini-mid");
    [["conv2d_2", 151], ["conv2d_3", 171], ["conv2d_4", 192], ["conv2d_5", 213], ["conv2d_6", 232]].forEach(function (item) {
        var y = p(item[1], oy);
        mini(1428, y, item[0], "mini-end");
        ghostRect(1429.5, y, "teal");
        thin(1442, y, 1450, 285.7);
    });
    mini(1439, 302, "... 15 more", "mini-end");

    // IsVariableInitialized
    [["training", 294, ""], ["conv2d_2", 312, "teal"], ["conv2d_3", 333, "teal"], ["conv2d_4", 354, "teal"], ["conv2d_5", 375, "teal"]].forEach(function (item) {
        var y = p(item[1], oy);
        mini(1251.5, y, item[0], "mini-end");
        ghostRect(1253, y, item[2]);
        thin(1265.5, y, 1274, 333);
    });
    mini(1263, 349, "... 15 more", "mini-end");
    out += '<ellipse class="op" cx="1292" cy="333" rx="8" ry="3"/><ellipse class="op" cx="1288" cy="333" rx="8" ry="3"/><ellipse class="op" cx="1284" cy="333" rx="8" ry="3"/>';
    out += '<text class="title-label" x="1286" y="325">IsVariableInitialized[0-77]</text>';

    // dropout_1
    box(1434, 338.5, 58, 18.5, "dropout_1", "gray");
    mini(1381.5, 338.5, "conv2d_1", "mini-end");
    ghostRect(1383.5, 338.5);
    thin(1396, 338.5, 1404.5, 338.5);
    [["training", 310, ""], ["conv2d_2", 330, "teal"], ["dropout_2", 351, "pink"], ["dropout_3", 371, "pink"], ["dropout_4", 391, "pink"]].forEach(function (item) {
        var y = p(item[1], oy);
        thin(1464, 338.5, 1472.5, y);
        ghostRect(1473.5, y, item[2]);
        mini(1487, y, item[0]);
    });
    mini(1475, 355, "... 8 more");

    // SGD
    box(1241, 378, 58, 17.5, "SGD", "gray");
    layerExtras(1270, 378);
}

draw();
```
